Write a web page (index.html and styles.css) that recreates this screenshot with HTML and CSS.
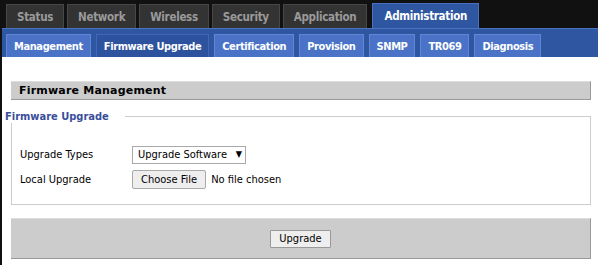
FILE: index.html
```html
<!DOCTYPE html>
<html lang="en">
<head>
    <meta charset="UTF-8">
    <meta name="viewport" content="width=device-width, initial-scale=1.0">
    <title>Administration - Firmware Upgrade</title>
    <link rel="stylesheet" href="styles.css">
</head>
<body>

<div class="page">
    <ul class="topnav">
        <li class="tab">Status</li>
        <li class="tab">Network</li>
        <li class="tab">Wireless</li>
        <li class="tab">Security</li>
        <li class="tab">Application</li>
        <li class="tab active">Administration</li>
    </ul>

    <ul class="subnav">
        <li class="subtab">Management</li>
        <li class="subtab active">Firmware Upgrade</li>
        <li class="subtab">Certification</li>
        <li class="subtab">Provision</li>
        <li class="subtab">SNMP</li>
        <li class="subtab">TR069</li>
        <li class="subtab">Diagnosis</li>
    </ul>

    <div class="content">
        <div class="section-title">Firmware Management</div>

        <fieldset class="group">
            <legend>Firmware Upgrade</legend>
            <div class="row">
                <label class="label" for="upgradeType">Upgrade Types</label>
                <span class="select-wrap">
                    <select id="upgradeType" class="select">
                        <option>Upgrade Software</option>
                    </select>
                </span>
            </div>
            <div class="row">
                <label class="label" for="localFile">Local Upgrade</label>
                <input type="file" id="localFile" class="file">
            </div>
        </fieldset>

        <div class="actions">
            <button class="btn" type="button">Upgrade</button>
        </div>
    </div>
</div>

</body>
</html>
```

FILE: styles.css
```css
body {
    margin: 0;
    padding: 0;
    background-color: #111;
    font-family: "DejaVu Sans Condensed", "DejaVu Sans", sans-serif;
    font-size: 11px;
}

.page {
    margin-left: 2px;
    height: 265px;
    background-color: #fff;
}

ul {
    list-style: none;
    margin: 0;
}

.topnav {
    display: flex;
    align-items: flex-end;
    gap: 3px;
    height: 28px;
    padding: 0 0 0 4px;
    background-color: #111;
}

.tab {
    flex-shrink: 0;
    white-space: nowrap;
    height: 23px;
    line-height: 24px;
    padding: 0 10px;
    background-color: #333;
    border: 1px solid #474747;
    border-bottom: none;
    color: #9a9a9a;
    font-weight: bold;
    font-size: 11.5px;
    letter-spacing: -0.3px;
}

.tab.active {
    height: 24px;
    margin-left: 2px;
    padding: 0 11px;
    background-color: #2f56a1;
    border-color: #4a70c0;
    color: #fff;
}

.subnav {
    display: flex;
    align-items: flex-end;
    gap: 5px;
    height: 28px;
    padding: 0 0 0 4px;
    background-color: #2f56a1;
    border-top: 1px solid #4a70c0;
}

.subtab {
    flex-shrink: 0;
    white-space: nowrap;
    height: 22px;
    line-height: 23px;
    padding: 0 7px;
    background-color: #4a73c8;
    border: 1px solid #6087d6;
    border-bottom: none;
    color: #fff;
    font-weight: bold;
    font-size: 11px;
    letter-spacing: -0.4px;
}

.subtab.active {
    background-color: #2d529e;
    border-color: #4167b6;
}

.content {
    padding: 24px 7px 5px 9px;
}

.section-title {
    height: 17px;
    line-height: 18px;
    padding-left: 8px;
    background-color: #ccc;
    border-top: 1px solid #ddd;
    border-right: 1px solid #999;
    border-bottom: 1px solid #999;
    font-family: "DejaVu Sans", sans-serif;
    font-size: 11px;
    font-weight: bold;
    letter-spacing: 0.2px;
    color: #000;
}

.group {
    margin: 10px 0 0 0;
    padding: 19px 0 0 8px;
    border: 1px solid #ccc;
    height: 74px;
}

.group legend {
    margin-left: -15px;
    padding: 0 16px 0 0;
    color: #3a4e9c;
    font-weight: bold;
    font-size: 11px;
}

.row {
    display: flex;
    align-items: center;
    height: 25px;
}

.label {
    width: 112px;
    color: #000;
}

.select-wrap {
    position: relative;
    display: inline-block;
}

.select-wrap::after {
    content: "\25BC";
    position: absolute;
    right: 4px;
    top: 3px;
    font-size: 9px;
    pointer-events: none;
}

.select {
    -webkit-appearance: none;
    appearance: none;
    display: block;
    width: 114px;
    height: 18px;
    padding: 0 0 0 5px;
    border: 1px solid #a9a9a9;
    border-radius: 0;
    background-color: #fff;
    font-family: "DejaVu Sans Condensed", sans-serif;
    font-size: 11px;
    color: #000;
}

.file {
    font-family: "DejaVu Sans Condensed", sans-serif;
    font-size: 11px;
    color: #000;
}

.file::file-selector-button {
    height: 19px;
    margin-right: 5px;
    padding: 0 8px;
    border: 1px solid #a9a9a9;
    border-radius: 2px;
    background-color: #eee;
    font-family: "DejaVu Sans Condensed", sans-serif;
    font-size: 11px;
}

.actions {
    display: flex;
    justify-content: center;
    align-items: center;
    height: 39px;
    margin-top: 13px;
    background-color: #ccc;
    border-top: 1px solid #ddd;
    border-right: 1px solid #999;
    border-bottom: 1px solid #999;
}

.btn {
    height: 18px;
    padding: 0 8px;
    border: 1px solid #999;
    border-radius: 1px;
    background-color: #eee;
    font-family: "DejaVu Sans Condensed", sans-serif;
    font-size: 11px;
    color: #000;
}
```
